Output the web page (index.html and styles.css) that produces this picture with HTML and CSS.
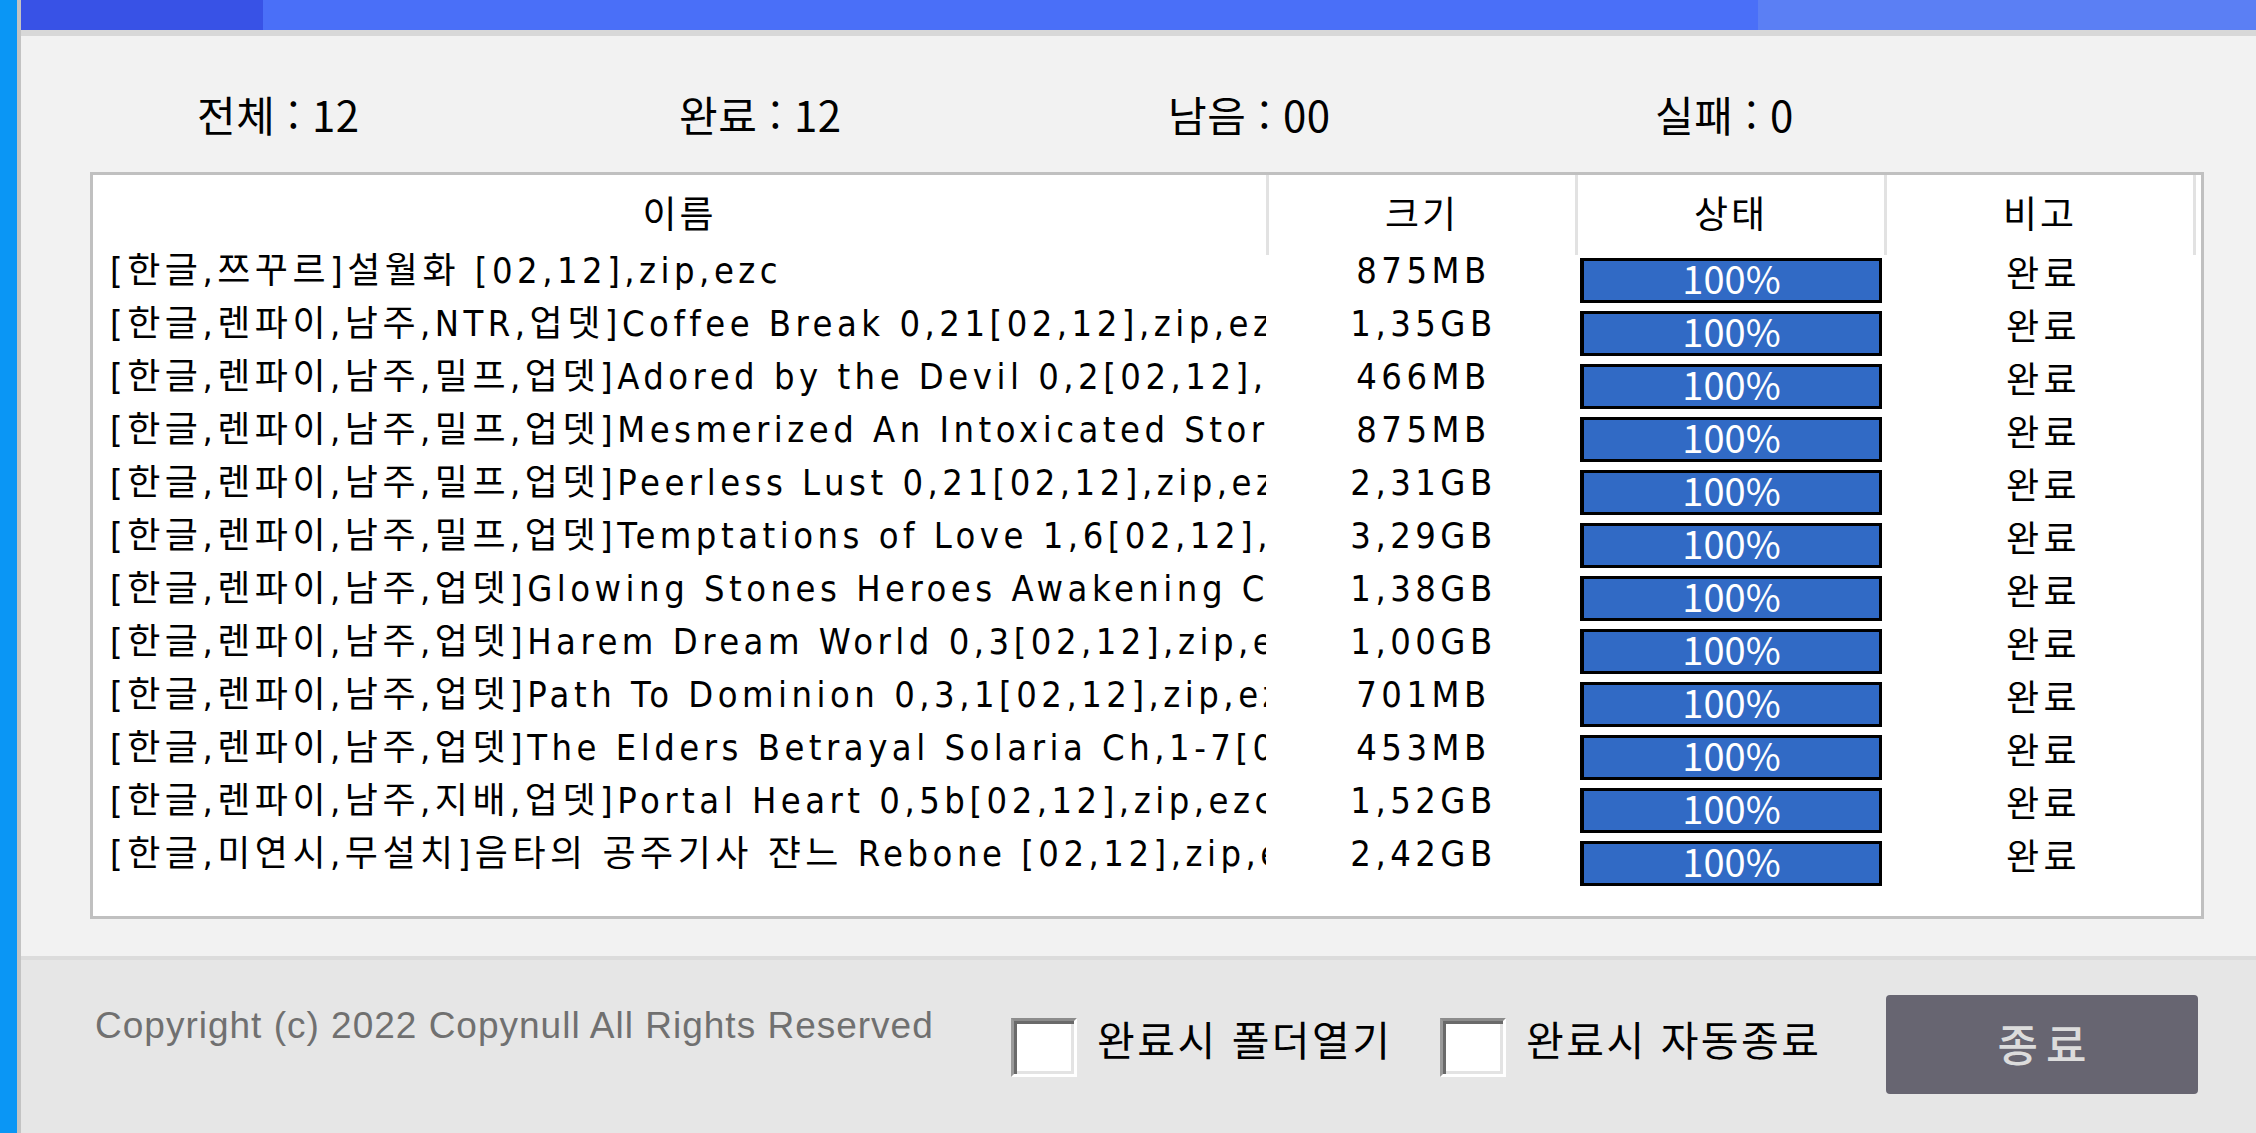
FILE: index.html
```html
<!DOCTYPE html>
<html lang="ko">
<head>
<meta charset="utf-8">
<title>다운로드 완료</title>
<link rel="stylesheet" href="styles.css">
</head>
<body>
<div class="app">
  <div class="strip"></div>
  <div class="main">
    <div class="topbar">
      <div class="seg seg-a"></div>
      <div class="seg seg-b"></div>
      <div class="seg seg-c"></div>
    </div>
    <div class="content">
      <div class="stats">
        <span>전체 : 12</span>
        <span>완료 : 12</span>
        <span>남음 : 00</span>
        <span>실패 : 0</span>
      </div>
      <div class="list">
        <div class="head">
          <div class="hc">이름</div>
          <div class="hc">크기</div>
          <div class="hc">상태</div>
          <div class="hc">비고</div>
          <div class="hc-end"></div>
        </div>
        <div class="row"><div class="name">[한글,쯔꾸르]설월화 [02,12],zip,ezc</div><div class="size">875MB</div><div class="status"><div class="bar">100%</div></div><div class="note">완료</div></div>
        <div class="row"><div class="name">[한글,렌파이,남주,NTR,업뎃]Coffee Break 0,21[02,12],zip,ezc</div><div class="size">1,35GB</div><div class="status"><div class="bar">100%</div></div><div class="note">완료</div></div>
        <div class="row"><div class="name">[한글,렌파이,남주,밀프,업뎃]Adored by the Devil 0,2[02,12],zip,ezc</div><div class="size">466MB</div><div class="status"><div class="bar">100%</div></div><div class="note">완료</div></div>
        <div class="row"><div class="name">[한글,렌파이,남주,밀프,업뎃]Mesmerized An Intoxicated Story 0,1[02,12],zip,ezc</div><div class="size">875MB</div><div class="status"><div class="bar">100%</div></div><div class="note">완료</div></div>
        <div class="row"><div class="name">[한글,렌파이,남주,밀프,업뎃]Peerless Lust 0,21[02,12],zip,ezc</div><div class="size">2,31GB</div><div class="status"><div class="bar">100%</div></div><div class="note">완료</div></div>
        <div class="row"><div class="name">[한글,렌파이,남주,밀프,업뎃]Temptations of Love 1,6[02,12],zip,ezc</div><div class="size">3,29GB</div><div class="status"><div class="bar">100%</div></div><div class="note">완료</div></div>
        <div class="row"><div class="name">[한글,렌파이,남주,업뎃]Glowing Stones Heroes Awakening Ch,1[02,12],zip,ezc</div><div class="size">1,38GB</div><div class="status"><div class="bar">100%</div></div><div class="note">완료</div></div>
        <div class="row"><div class="name">[한글,렌파이,남주,업뎃]Harem Dream World 0,3[02,12],zip,ezc</div><div class="size">1,00GB</div><div class="status"><div class="bar">100%</div></div><div class="note">완료</div></div>
        <div class="row"><div class="name">[한글,렌파이,남주,업뎃]Path To Dominion 0,3,1[02,12],zip,ezc</div><div class="size">701MB</div><div class="status"><div class="bar">100%</div></div><div class="note">완료</div></div>
        <div class="row"><div class="name">[한글,렌파이,남주,업뎃]The Elders Betrayal Solaria Ch,1-7[02,12],zip,ezc</div><div class="size">453MB</div><div class="status"><div class="bar">100%</div></div><div class="note">완료</div></div>
        <div class="row"><div class="name">[한글,렌파이,남주,지배,업뎃]Portal Heart 0,5b[02,12],zip,ezc</div><div class="size">1,52GB</div><div class="status"><div class="bar">100%</div></div><div class="note">완료</div></div>
        <div class="row"><div class="name">[한글,미연시,무설치]음타의 공주기사 쟌느 Rebone [02,12],zip,ezc</div><div class="size">2,42GB</div><div class="status"><div class="bar">100%</div></div><div class="note">완료</div></div>
      </div>
    </div>
    <div class="footer">
      <div class="copy">Copyright (c) 2022 Copynull All Rights Reserved</div>
      <label class="check check-open"><span class="box"></span><span class="check-label">완료시 폴더열기</span></label>
      <label class="check check-exit"><span class="box"></span><span class="check-label">완료시 자동종료</span></label>
      <div class="btn">종료</div>
    </div>
  </div>
</div>
</body>
</html>
```

FILE: styles.css
```css
html, body {
  margin: 0;
  padding: 0;
}

body {
  width: 2256px;
  height: 1133px;
  overflow: hidden;
  background: #f2f2f2;
  font-family: "Noto Sans CJK KR", "Noto Sans", sans-serif;
  color: #000;
}

.app {
  display: flex;
  height: 1133px;
}

.strip {
  flex: none;
  width: 17px;
  background: #0a96f5;
  border-right: 4px solid #c3c3c3;
}

.main {
  flex: 1;
  min-width: 0;
  display: flex;
  flex-direction: column;
}

/* top progress strip */
.topbar {
  flex: none;
  display: flex;
  height: 30px;
  border-bottom: 6px solid #d8d8d8;
}

.seg-a {
  width: 242px;
  background: #3852e6;
}

.seg-b {
  flex: 1;
  background: #4a6ff8;
}

.seg-c {
  width: 498px;
  background: #5b7ff4;
}

/* content area */
.content {
  flex: none;
  height: 920px;
  box-sizing: border-box;
  padding-top: 57px;
  background: #f2f2f2;
}

.stats {
  display: grid;
  grid-template-columns: 482px 489px 487px auto;
  padding-left: 176px;
  height: 42px;
  font-size: 42px;
  line-height: 42px;
  letter-spacing: 0.5px;
  white-space: nowrap;
}

.list {
  margin: 37px 0 0 69px;
  width: 2114px;
  height: 747px;
  box-sizing: border-box;
  border: 3px solid #c0c0c0;
  background: #fff;
  overflow: hidden;
}

.head,
.row {
  display: grid;
  grid-template-columns: 1176px 309px 309px 309px 1fr;
}

.head {
  height: 80px;
}

.hc {
  display: flex;
  align-items: center;
  justify-content: center;
  box-sizing: border-box;
  padding-bottom: 5px;
  border-right: 3px solid #e2e2e2;
  font-size: 37px;
  line-height: 37px;
  letter-spacing: 3px;
}

.row {
  height: 53px;
  font-family: "Liberation Sans Narrow", "DejaVu Sans Condensed", "Noto Sans CJK KR", sans-serif;
  font-size: 36px;
  line-height: 36px;
  letter-spacing: 4.5px;
}

.name {
  margin: -2px 3px 0 0;
  padding-left: 17px;
  white-space: nowrap;
  overflow: hidden;
}

.size {
  margin-top: -2px;
  text-align: center;
  white-space: nowrap;
}

.status {
  padding: 3px 0 0 2px;
}

.bar {
  width: 302px;
  height: 45px;
  box-sizing: border-box;
  border: 3px solid #000;
  border-left-width: 4px;
  background: #316ac5;
  color: #fff;
  text-align: center;
  font-family: "Noto Sans CJK KR", sans-serif;
  font-size: 38px;
  line-height: 34px;
  letter-spacing: 0;
}

.note {
  margin-top: -2px;
  text-align: center;
  padding-left: 4px;
  font-family: "Noto Sans CJK KR", sans-serif;
}

/* footer */
.footer {
  flex: 1;
  display: flex;
  align-items: flex-start;
  padding: 0 58px 0 74px;
  background: #e6e6e6;
  border-top: 4px solid #dcdcdc;
}

.copy {
  flex: none;
  width: 916px;
  margin-top: 47px;
  font-family: "Liberation Sans", Arial, sans-serif;
  font-size: 37px;
  line-height: 37px;
  letter-spacing: 1px;
  color: #707070;
  white-space: nowrap;
}

.check {
  flex: none;
  display: flex;
  align-items: flex-start;
  margin-top: 58px;
}

.check-open {
  width: 429px;
}

.check-exit {
  width: 446px;
}

.box {
  flex: none;
  width: 66px;
  height: 59px;
  box-sizing: border-box;
  background: #fff;
  border-top: 3px solid #8c8c8c;
  border-left: 3px solid #9a9a9a;
  border-right: 3px solid #fff;
  border-bottom: 3px solid #fff;
  box-shadow: inset 3px 3px 0 #6a6a6a, inset -3px -3px 0 #e3e3e3;
}

.check-label {
  margin-left: 20px;
  font-size: 41px;
  line-height: 41px;
  letter-spacing: 2.5px;
  white-space: nowrap;
}

.btn {
  flex: none;
  width: 312px;
  height: 99px;
  margin-top: 35px;
  display: flex;
  align-items: center;
  justify-content: center;
  padding: 0 0 4px 8px;
  box-sizing: border-box;
  border-radius: 4px;
  background: #676571;
  color: #dcdcdc;
  font-size: 44px;
  font-weight: 500;
  letter-spacing: 8px;
}
```
